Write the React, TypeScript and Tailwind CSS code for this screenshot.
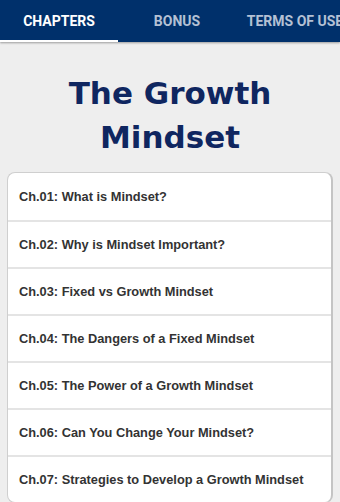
import React from "react";

const chapters = [
  "Ch.01: What is Mindset?",
  "Ch.02: Why is Mindset Important?",
  "Ch.03: Fixed vs Growth Mindset",
  "Ch.04: The Dangers of a Fixed Mindset",
  "Ch.05: The Power of a Growth Mindset",
  "Ch.06: Can You Change Your Mindset?",
  "Ch.07: Strategies to Develop a Growth Mindset",
];

export default function App() {
  return (
    <div className="w-[340px] h-[502px] overflow-hidden bg-[#eeeeee] flex flex-col" style={{ fontFamily: "Roboto, 'Liberation Sans', sans-serif" }}>
      <div className="h-[42px] bg-[#00306b] flex shrink-0 shadow-[0_1px_2px_rgba(0,0,0,0.35)] relative z-10 whitespace-nowrap">
        <div className="w-[118px] shrink-0 flex items-center justify-center text-[14px] font-bold text-white border-b-2 border-white pt-[2px]">CHAPTERS</div>
        <div className="w-[118px] shrink-0 flex items-center justify-center text-[14px] font-bold text-[#b4c0d4]">BONUS</div>
        <div className="w-[118px] shrink-0 flex items-center justify-center text-[14px] font-bold text-[#b4c0d4]">TERMS OF USE</div>
      </div>
      <h1 className="text-center font-bold text-[#0f2660] text-[31px] leading-[44px] mt-[29px] mb-[13px]" style={{ fontFamily: "'DejaVu Sans', Verdana, sans-serif" }}>
        The Growth<br />Mindset
      </h1>
      <div className="mx-[7px] bg-white border border-[#cfcfcf] border-r-2 border-r-[#c4c4c4] rounded-[8px] shrink-0" style={{ fontFamily: "'Liberation Sans', Arial, sans-serif" }}>
        {chapters.map((c, i) => (
          <div key={i} className={`h-[47px] flex items-center pl-[11px] text-[12.8px] font-bold text-[#333333] ${i > 0 ? "border-t-2 border-[#e4e4e4]" : ""}`}>
            {c}
          </div>
        ))}
      </div>
    </div>
  );
}
